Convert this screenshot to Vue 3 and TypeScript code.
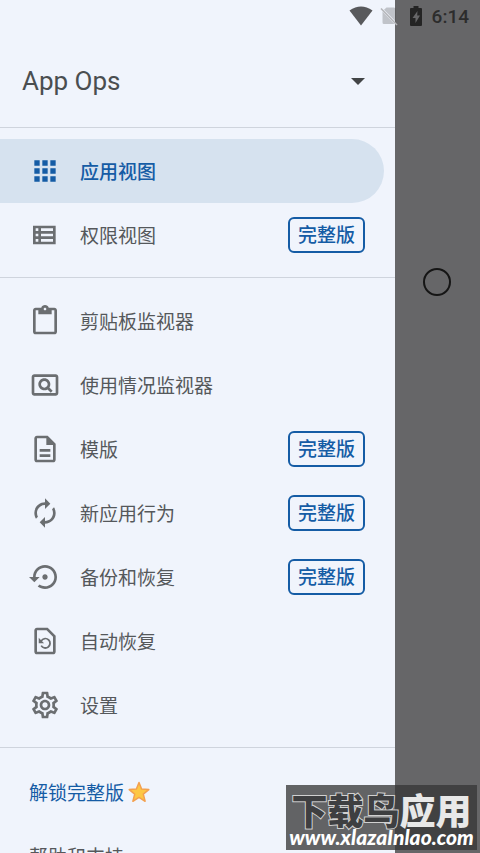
<script setup lang="ts">
import { ref } from 'vue'

interface MenuItem {
  id: string
  label: string
  icon: string
  pro?: boolean
}

const selected = ref('apps')
const title = ref('App Ops')

const groups: MenuItem[][] = [
  [
    { id: 'apps', label: '应用视图', icon: 'M4 8h4V4H4v4zm6 12h4v-4h-4v4zm-6 0h4v-4H4v4zm0-6h4v-4H4v4zm6 0h4v-4h-4v4zm6-10v4h4V4h-4zm-6 4h4V4h-4v4zm6 6h4v-4h-4v4zm0 6h4v-4h-4v4z' },
    { id: 'permissions', label: '权限视图', pro: true, icon: 'M3 5v14h17V5H3zm4 2v2H5V7h2zm-2 6v-2h2v2H5zm0 2h2v2H5v-2zm13 2H9v-2h9v2zm0-4H9v-2h9v2zm0-4H9V7h9v2z' },
  ],
  [
    { id: 'clipboard', label: '剪贴板监视器', icon: 'M19 2h-4.18C14.4.84 13.3 0 12 0c-1.3 0-2.4.84-2.82 2H5c-1.1 0-2 .9-2 2v16c0 1.1.9 2 2 2h14c1.1 0 2-.9 2-2V4c0-1.1-.9-2-2-2zm-7 0c.55 0 1 .45 1 1s-.45 1-1 1-1-.45-1-1 .45-1 1-1zm7 18H5V4h2v3h10V4h2v16z' },
    { id: 'usage', label: '使用情况监视器', icon: 'M11.49 16c.88 0 1.7-.26 2.39-.7l2.44 2.44 1.42-1.42-2.44-2.43c.44-.7.7-1.51.7-2.39C16 9.01 13.99 7 11.5 7S7 9.01 7 11.5 9.01 16 11.49 16zm.01-7C12.88 9 14 10.12 14 11.5S12.88 14 11.5 14 9 12.88 9 11.5 10.12 9 11.5 9zM20 4H4c-1.1 0-2 .9-2 2v12c0 1.1.9 2 2 2h16c1.1 0 2-.9 2-2V6c0-1.1-.9-2-2-2zm0 14H4V6h16v12z' },
    { id: 'templates', label: '模版', pro: true, icon: 'M8 16h8v2H8zm0-4h8v2H8zm6-10H6c-1.1 0-2 .9-2 2v16c0 1.1.89 2 1.99 2H18c1.1 0 2-.9 2-2V8l-6-6zm4 18H6V4h7v5h5v11z' },
    { id: 'behavior', label: '新应用行为', pro: true, icon: 'M12 6v3l4-4-4-4v3c-4.42 0-8 3.58-8 8 0 1.57.46 3.03 1.24 4.26L6.7 14.8c-.45-.83-.7-1.79-.7-2.8 0-3.31 2.69-6 6-6zm6.76 1.74L17.3 9.2c.44.84.7 1.79.7 2.8 0 3.31-2.69 6-6 6v-3l-4 4 4 4v-3c4.42 0 8-3.58 8-8 0-1.57-.46-3.03-1.24-4.26z' },
    { id: 'backup', label: '备份和恢复', pro: true, icon: 'M14 12c0-1.1-.9-2-2-2s-2 .9-2 2 .9 2 2 2 2-.9 2-2zm-2-9c-4.97 0-9 4.03-9 9H0l4 4 4-4H5c0-3.87 3.13-7 7-7s7 3.13 7 7-3.13 7-7 7c-1.51 0-2.91-.49-4.06-1.3l-1.42 1.44C8.04 20.3 9.94 21 12 21c4.97 0 9-4.03 9-9s-4.03-9-9-9z' },
    { id: 'auto', label: '自动恢复', icon: 'M14 2H6c-1.1 0-2 .9-2 2v16c0 1.1.9 2 2 2h12c1.1 0 2-.9 2-2V8l-6-6zm4 18H6V4h7.17L18 8.83V20zM7.3 9.6v4h4l-1.500-1.500a2.900 2.900 0 1 1-.1 3l-1.100.7a4.200 4.200 0 1 0 .3-4.600z' },
    { id: 'settings', label: '设置', icon: 'M19.43 12.98c.04-.32.07-.64.07-.98 0-.34-.03-.66-.07-.98l2.11-1.65c.19-.15.24-.42.12-.64l-2-3.46c-.09-.16-.26-.25-.44-.25-.06 0-.12.01-.17.03l-2.49 1c-.52-.4-1.08-.73-1.69-.98l-.38-2.65C14.46 2.18 14.25 2 14 2h-4c-.25 0-.46.18-.49.42l-.38 2.65c-.61.25-1.17.59-1.69.98l-2.49-1c-.06-.02-.12-.03-.18-.03-.17 0-.34.09-.43.25l-2 3.46c-.13.22-.07.49.12.64l2.11 1.65c-.04.32-.07.65-.07.98 0 .33.03.66.07.98l-2.11 1.65c-.19.15-.24.42-.12.64l2 3.46c.09.16.26.25.44.25.06 0 .12-.01.17-.03l2.49-1c.52.4 1.08.73 1.69.98l.38 2.65c.03.24.24.42.49.42h4c.25 0 .46-.18.49-.42l.38-2.65c.61-.25 1.17-.59 1.69-.98l2.49 1c.06.02.12.03.18.03.17 0 .34-.09.43-.25l2-3.46c.12-.22.07-.49-.12-.64l-2.11-1.65zm-1.98-1.71c.04.31.05.52.05.73 0 .21-.02.43-.05.73l-.14 1.13.89.7 1.08.84-.7 1.21-1.27-.51-1.04-.42-.9.68c-.43.32-.84.56-1.25.73l-1.06.43-.16 1.13-.2 1.35h-1.4l-.19-1.35-.16-1.13-1.06-.43c-.43-.18-.83-.41-1.23-.71l-.91-.7-1.06.43-1.27.51-.7-1.21 1.08-.84.89-.7-.14-1.13c-.03-.31-.05-.54-.05-.74s.02-.43.05-.73l.14-1.13-.89-.7-1.08-.84.7-1.21 1.27.51 1.04.42.9-.68c.43-.32.84-.56 1.25-.73l1.06-.43.16-1.13.2-1.35h1.39l.19 1.35.16 1.13 1.06.43c.43.18.83.41 1.23.71l.91.7 1.06-.43 1.27-.51.7 1.21-1.07.85-.89.7.14 1.13zM12 8c-2.21 0-4 1.79-4 4s1.79 4 4 4 4-1.79 4-4-1.79-4-4-4zm0 6c-1.1 0-2-.9-2-2s.9-2 2-2 2 .9 2 2-.9 2-2 2z' },
  ],
]
</script>

<template>
  <div class="screen">
    <aside class="drawer">
      <header class="head">
        <select v-model="title" class="title" aria-label="App Ops">
          <option>App Ops</option>
        </select>
        <svg class="caret" viewBox="0 0 14 8" aria-hidden="true"><path d="M0 0h14L7 7z" /></svg>
      </header>

      <nav>
        <div v-for="(group, i) in groups" :key="i" class="group">
          <button
            v-for="item in group"
            :key="item.id"
            type="button"
            class="row"
            :class="{ active: item.id === selected }"
            @click="selected = item.id"
          >
            <svg class="icon" viewBox="0 0 24 24" aria-hidden="true"><path fill-rule="evenodd" :d="item.icon" /></svg>
            <span class="label">{{ item.label }}</span>
            <span v-if="item.pro" class="badge">完整版</span>
          </button>
        </div>
        <div class="group more">
          <button type="button" class="row link unlock">
            <span class="label">解锁完整版</span>
            <svg class="star" viewBox="0 0 22 22" aria-hidden="true">
              <path d="M11 1.500l2.600 6.600 7.200.5-5.500 4.500 1.800 7.200L11 16.400l-6.100 3.900 1.800-7.200L1.200 8.600l7.200-.5z" />
            </svg>
          </button>
          <button type="button" class="row link"><span class="label">帮助和支持</span></button>
        </div>
      </nav>
    </aside>

    <div class="backdrop">
      <span class="ring"></span>
    </div>

    <div class="status">
      <svg class="wifi" viewBox="0 0 24 20" aria-hidden="true"><path d="M12 19.500L.5 4.500Q12-3.500 23.500 4.500z" /></svg>
      <svg class="sim" viewBox="0 0 18 20" aria-hidden="true">
        <path class="card" d="M6.500 1.500H14a1.500 1.500 0 0 1 1.500 1.500v12.500L4 3.800zM2.500 5.500L14.500 18H4a1.500 1.500 0 0 1-1.500-1.500z" />
        <path class="slash" d="M1 2.500L17 19" />
      </svg>
      <svg class="battery" viewBox="0 0 14 20" aria-hidden="true">
        <path fill-rule="evenodd" d="M4.500 0h5v2H12a1 1 0 0 1 1 1v16a1 1 0 0 1-1 1H2a1 1 0 0 1-1-1V3a1 1 0 0 1 1-1h2.500zM8.500 5L3.500 12h3v5l4.500-7.500H8.200z" />
      </svg>
      <span class="time">6:14</span>
    </div>

    <div class="mark">
      <div class="mark-name"><span class="outlined">下载鸟</span><span>应用</span></div>
      <div class="mark-url">www.xlazaInlao.com</div>
    </div>
  </div>
</template>

<style>
body {
  margin: 0;
}
</style>

<style scoped>
.screen {
  position: relative;
  display: flex;
  height: 100vh;
  overflow: hidden;
  background: #666668;
  font-family: Roboto, 'Noto Sans CJK SC', sans-serif;
  color: #55585b;
}
.drawer {
  flex: 1;
  min-width: 0;
  overflow: hidden;
  background: #f0f4fc;
}
.backdrop {
  flex: none;
  width: 85px;
  box-sizing: border-box;
  padding: 268px 0 0 28px;
}
.ring {
  display: block;
  box-sizing: border-box;
  width: 28px;
  height: 28px;
  border: 2px solid #151515;
  border-radius: 50%;
}
.head {
  display: flex;
  align-items: center;
  padding: 60px 30px 23px 22px;
}
.title {
  flex: 1;
  height: 44px;
  padding: 0 0 1px;
  border: 0;
  appearance: none;
  background: none;
  font: 400 26px/43px Roboto, sans-serif;
  color: #4a4e50;
}
.caret {
  width: 14px;
  height: 8px;
  fill: #424446;
}
.group {
  padding: 11px 0 10px;
  border-top: 1px solid #cfd4dd;
}
.more {
  padding-top: 12px;
}
.row {
  display: flex;
  align-items: center;
  width: 100%;
  height: 64px;
  padding: 0 30px 0 29px;
  border: 0;
  background: none;
  font: inherit;
  font-size: 19px;
  color: inherit;
  text-align: left;
}
.active {
  width: calc(100% - 11px);
  border-radius: 0 32px 32px 0;
  background: #d6e2ef;
  color: #155ca5;
  font-weight: 500;
}
.icon {
  flex: none;
  width: 32px;
  height: 32px;
  margin-right: 19px;
  fill: #6b6e71;
}
.active .icon {
  fill: #155ca5;
}
.label {
  flex: 1;
  padding-bottom: 2px;
}
.badge {
  padding: 2px 8px 0;
  border: 2px solid #155ca5;
  border-radius: 6px;
  font-weight: 500;
  line-height: 30px;
  color: #155ca5;
}
.link {
  gap: 4px;
}
.link .label {
  flex: none;
}
.unlock {
  color: #155ca5;
}
.star {
  width: 22px;
  height: 22px;
  fill: #fdc744;
  stroke: #f3a04f;
  stroke-width: 1.500;
  stroke-linejoin: round;
}
.status {
  position: absolute;
  top: 0;
  right: 11px;
  display: flex;
  align-items: center;
  height: 32px;
}
.wifi {
  width: 24px;
  height: 20px;
  margin-right: 7px;
  fill: #58595c;
}
.sim {
  width: 18px;
  height: 20px;
  margin-right: 11px;
}
.card {
  fill: #000;
  fill-opacity: 0.2;
}
.slash {
  fill: none;
  stroke: #b4b5b8;
  stroke-width: 1.500;
}
.battery {
  width: 14px;
  height: 20px;
  margin-right: 9px;
  fill: #242424;
}
.time {
  font-size: 19px;
  font-weight: 500;
  color: #2c2c2c;
}
.mark {
  position: absolute;
  right: 3px;
  bottom: 3px;
  box-sizing: border-box;
  width: 191px;
  height: 65px;
  padding-top: 8px;
  background: rgba(55, 55, 55, 0.77);
  color: #e8e8e8;
  text-align: center;
  white-space: nowrap;
}
.mark-name {
  font-family: 'Noto Sans CJK SC', sans-serif;
  font-size: 36px;
  font-weight: 900;
  line-height: 32px;
}
.outlined {
  color: #3e3f41;
  -webkit-text-stroke: 2px #d0d0d0;
  paint-order: stroke fill;
}
.mark-url {
  font: italic 900 21px/24px Lato, sans-serif;
  color: #fff;
}
</style>
